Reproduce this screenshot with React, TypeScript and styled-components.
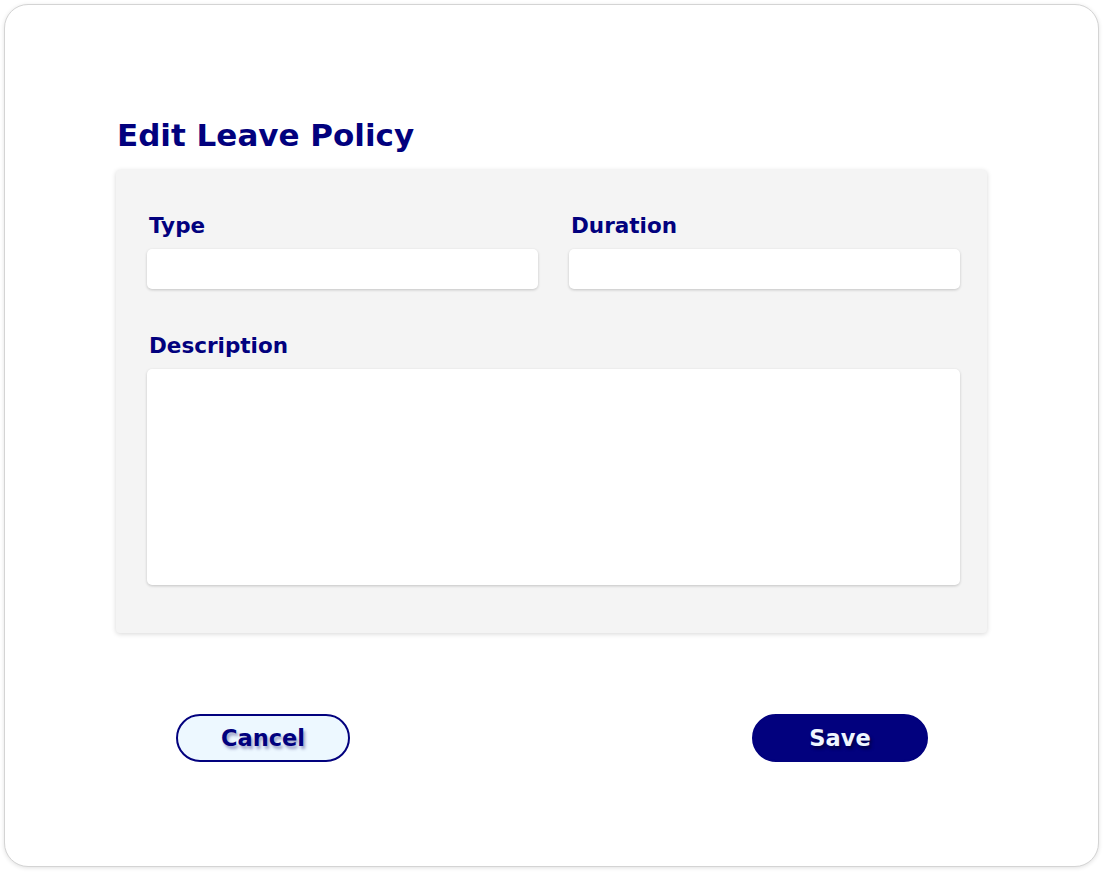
import styled, { createGlobalStyle } from 'styled-components'

const GlobalStyle = createGlobalStyle`
  body {
    margin: 0;
    background: #ffffff;
    font-family: 'DejaVu Sans', 'Noto Sans', sans-serif;
  }
`

const Page = styled.div`
  padding: 4px;
  width: 1103px;
  height: 872px;
  box-sizing: border-box;
`

const Card = styled.div`
  box-sizing: border-box;
  width: 1095px;
  height: 863px;
  border: 1px solid #d4d4d4;
  border-radius: 24px;
  box-shadow: 0 1px 4px rgba(0, 0, 0, 0.12);
  background: #ffffff;
  padding: 110px 0 0 111px;
  display: flex;
  flex-direction: column;
`

const Title = styled.h1`
  margin: 0 0 15px;
  padding-left: 1px;
  font-size: 31px;
  line-height: 40px;
  font-weight: 700;
  color: #02017e;
`

const Panel = styled.div`
  box-sizing: border-box;
  width: 871px;
  background: #f4f4f4;
  border-radius: 4px;
  box-shadow: 0 1px 5px rgba(0, 0, 0, 0.16);
  padding: 41px 27px 48px 31px;
  display: flex;
  flex-direction: column;
  gap: 42px;
`

const Row = styled.div`
  display: grid;
  grid-template-columns: 1fr 1fr;
  gap: 31px;
`

const Field = styled.label`
  display: flex;
  flex-direction: column;
`

const Label = styled.span`
  font-size: 21.5px;
  line-height: 30px;
  font-weight: 700;
  color: #02017e;
  padding-left: 2px;
  margin-bottom: 8px;
`

const Input = styled.input`
  box-sizing: border-box;
  height: 40px;
  border: none;
  border-radius: 5px;
  background: #ffffff;
  box-shadow: 0 1px 3px rgba(0, 0, 0, 0.2);
  outline: none;
  padding: 0 12px;
  font: inherit;
`

const TextArea = styled.textarea`
  box-sizing: border-box;
  height: 216px;
  border: none;
  border-radius: 5px;
  background: #ffffff;
  box-shadow: 0 1px 3px rgba(0, 0, 0, 0.2);
  outline: none;
  resize: none;
  padding: 12px;
  font: inherit;
`

const Actions = styled.div`
  display: flex;
  justify-content: space-between;
  width: 752px;
  margin: 81px 0 0 60px;
`

const Button = styled.button<{ $primary?: boolean }>`
  box-sizing: border-box;
  width: ${({ $primary }) => ($primary ? '176px' : '174px')};
  height: 48px;
  border-radius: 24px;
  border: 2px solid #02017e;
  background: ${({ $primary }) => ($primary ? '#02017e' : '#edf8ff')};
  color: ${({ $primary }) => ($primary ? '#eef6ff' : '#02017e')};
  font-family: 'DejaVu Sans', 'Noto Sans', sans-serif;
  font-size: 22.5px;
  font-weight: 700;
  text-shadow: ${({ $primary }) =>
    $primary ? '2px 3px 3px rgba(0, 0, 40, 0.6)' : '2px 3px 3px rgba(60, 60, 130, 0.45)'};
  cursor: pointer;
`

export default function App() {
  return (
    <Page>
      <GlobalStyle />
      <Card>
        <Title>Edit Leave Policy</Title>
        <Panel>
          <Row>
            <Field>
              <Label>Type</Label>
              <Input type="text" />
            </Field>
            <Field>
              <Label>Duration</Label>
              <Input type="text" />
            </Field>
          </Row>
          <Field>
            <Label>Description</Label>
            <TextArea />
          </Field>
        </Panel>
        <Actions>
          <Button>Cancel</Button>
          <Button $primary>Save</Button>
        </Actions>
      </Card>
    </Page>
  )
}
